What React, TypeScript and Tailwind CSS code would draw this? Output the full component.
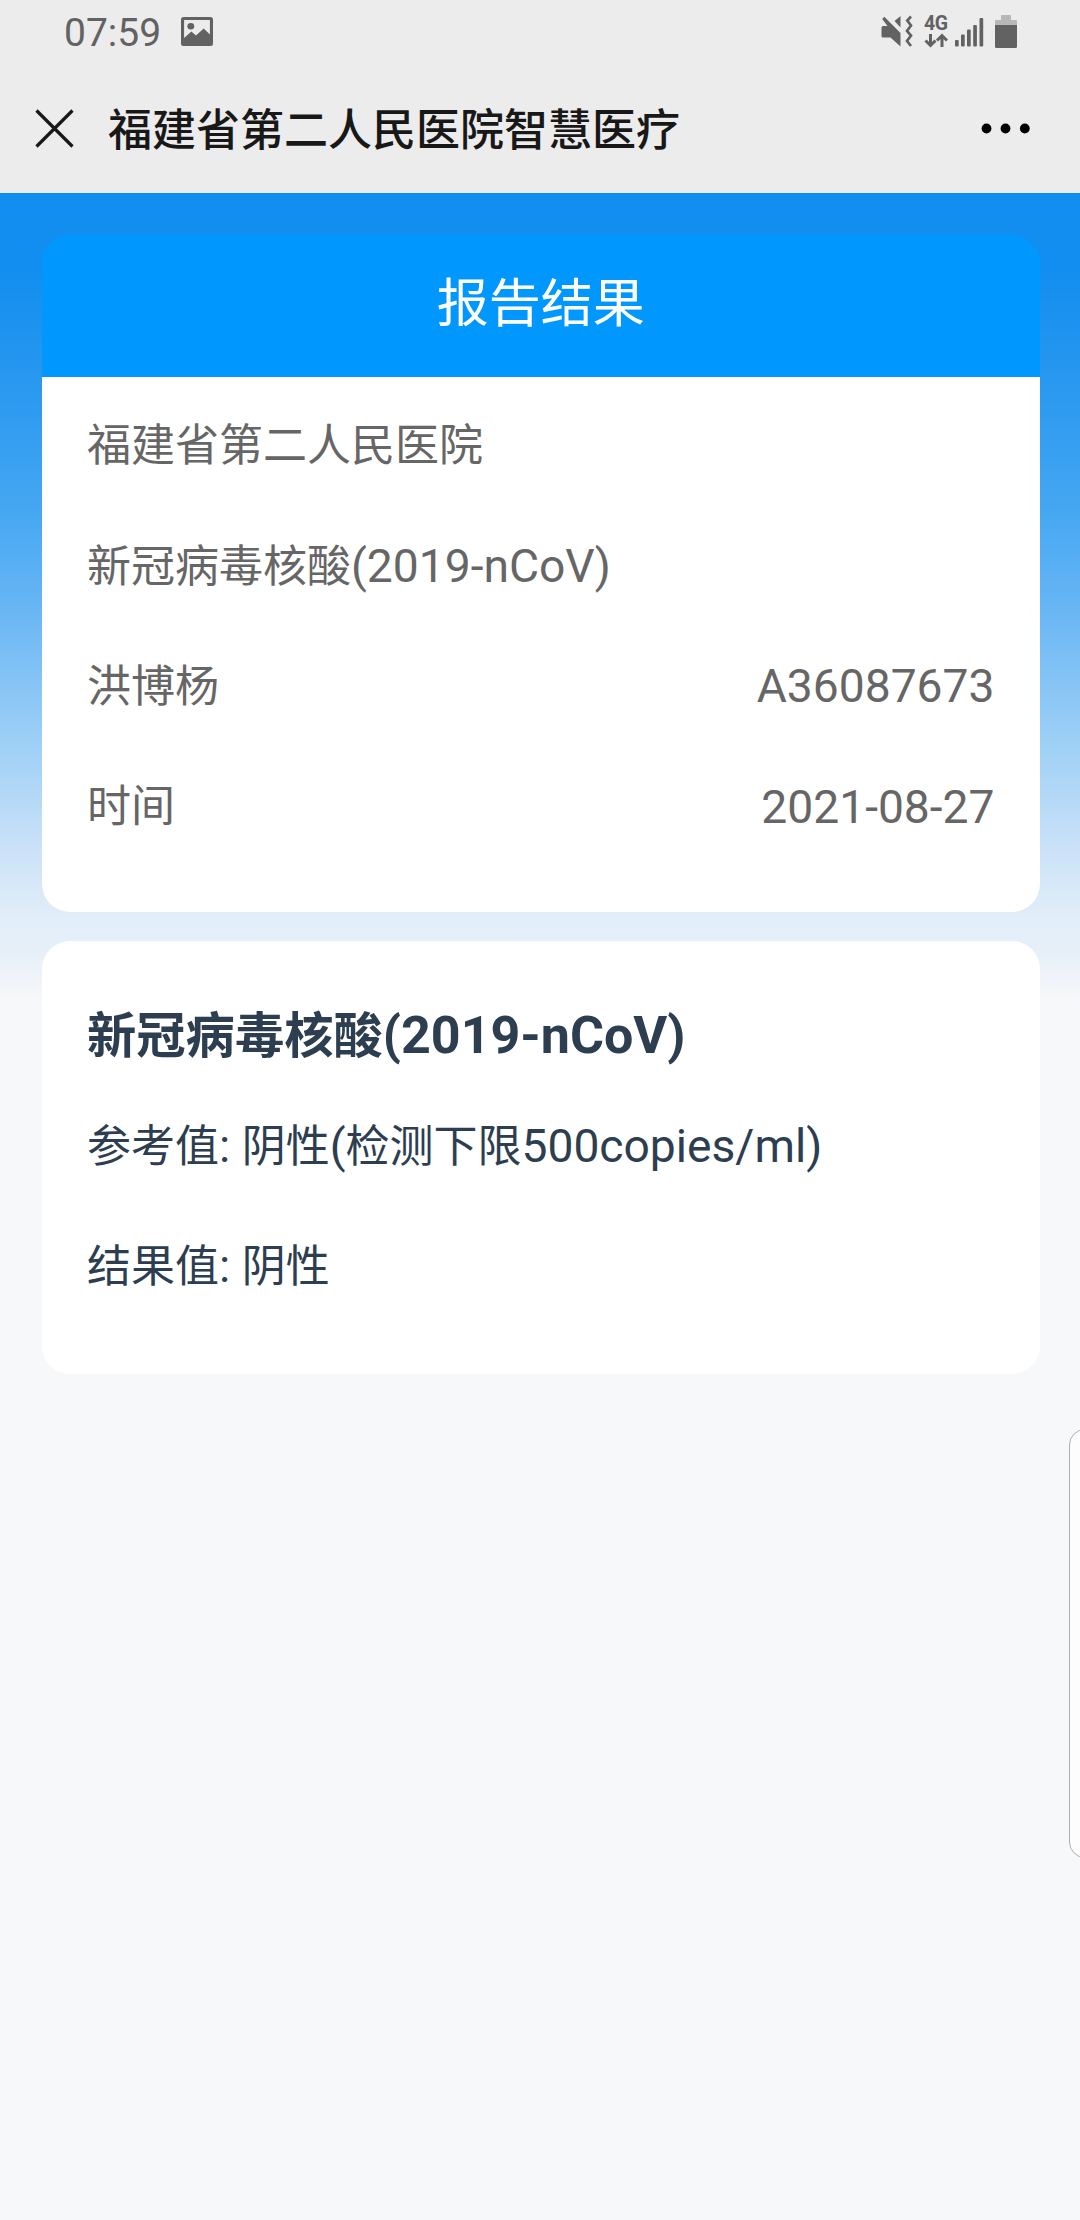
import React from "react";

// Latin runs are set slightly larger than the surrounding Chinese glyphs.
function Mixed({ text, latin }: { text: string; latin: string }) {
  const runs = text.match(/[\x20-\x7e]+|[^\x20-\x7e]+/g) ?? [];
  return (
    <span className="whitespace-pre">
      {runs.map((run, i) =>
        /^[\x20-\x7e]/.test(run) ? (
          <span key={i} className={latin}>
            {run}
          </span>
        ) : (
          run
        ),
      )}
    </span>
  );
}

function StatusBar() {
  return (
    <div className="flex h-16 items-start justify-between pr-[63px] pl-16 text-[#626262]">
      <div className="flex items-start">
        <span className="mt-[10px] w-[97px] text-[39px] leading-[46px]">07:59</span>
        <svg className="mt-[17px] ml-5" width="32" height="29" viewBox="0 0 31 29" preserveAspectRatio="none">
          <rect width="31" height="29" rx="2.5" fill="#626262" />
          <path d="M3 3h25v14.500l-6-6-7.500 7-4.500-4-7 6.500z" fill="#ececec" />
          <circle cx="9.500" cy="9.300" r="3.300" fill="#626262" />
        </svg>
      </div>
      <div className="flex items-start">
        <svg className="mt-[15px]" width="32" height="33" viewBox="0 0 32 33" fill="#626262">
          <path d="M.5 12.500q0-1.500 1.500-1.500h4.500L1.200 4 3.300 1.800 19.500 18v13.500L9.500 22.500H2q-1.500 0-1.500-1.500z" />
          <path d="M19.500 1v11.500l-6-6.500z" />
          <path d="M30 1.500l-3.700 4 3.700 5-4 5.500 4 4.500-4 5.500 4 5" fill="none" stroke="#626262" strokeWidth="2.700" />
        </svg>
        <div className="mt-[14px] ml-[11px] flex w-6 flex-col">
          <span className="h-[19px] text-[19.500px] leading-[19px] font-bold tracking-[-0.5px]">4G</span>
          <svg width="24" height="15" viewBox="0 0 24 15" fill="none" stroke="#626262" strokeWidth="3">
            <path d="M6.500 1v11.500M1.500 7.500l5 5 5-5" />
            <path d="M18 14V2.500M13 7.500l5-5 5 5" />
          </svg>
        </div>
        <svg className="mt-[17px] ml-[7px]" width="29" height="30" viewBox="0 0 29 30" fill="#626262">
          <rect x="0" y="23" width="3.700" height="6.500" rx="1" />
          <rect x="6" y="17.500" width="3.700" height="12" rx="1" />
          <rect x="12" y="12.500" width="3.700" height="17" rx="1" />
          <rect x="18.200" y="8" width="3.700" height="21.500" rx="1" />
          <rect x="24.500" y="1" width="3.700" height="28.500" rx="1" />
        </svg>
        <svg className="mt-[15px] ml-[11px]" width="22" height="33" viewBox="0 0 22 33">
          <path d="M1 5h5V1q0-1 1-1h8q1 0 1 1v4h5q1 0 1 1v5H0V6q0-1 1-1z" fill="#b7b7b7" />
          <path d="M0 10h22v21.500q0 1.500-1.500 1.500h-19Q0 33 0 31.500z" fill="#626262" />
        </svg>
      </div>
    </div>
  );
}

function TitleBar() {
  return (
    <div className="flex h-[129px] items-start pr-[50px] pl-[35px] text-[#181818]">
      <svg className="mt-[45px]" width="39" height="39" viewBox="0 0 39 39" stroke="#181818" strokeWidth="3.200">
        <path d="M1.500 1.500l36 36M37.500 1.500l-36 36" />
      </svg>
      <h1 className="mt-[37px] ml-[34px] flex-1 text-[44px] leading-[60px] font-medium">
        福建省第二人民医院智慧医疗
      </h1>
      <svg className="mt-[59px]" width="49" height="11" viewBox="0 0 49 11">
        <circle cx="5.500" cy="5.500" r="4.900" />
        <circle cx="24.500" cy="5.500" r="4.900" />
        <circle cx="43.800" cy="5.500" r="4.900" />
      </svg>
    </div>
  );
}

function Row({ left, right }: { left: string; right?: string }) {
  return (
    <div className="flex h-[120.500px] items-center justify-between text-[44px] leading-[60px] text-[#666666]">
      <Mixed text={left} latin="text-[46.200px]" />
      {right && <Mixed text={right} latin="text-[46.200px]" />}
    </div>
  );
}

export default function App() {
  return (
    <div className="relative h-[2220px] w-[1080px] overflow-hidden bg-[#f7f8fa] font-['Roboto','Noto_Sans_CJK_SC',sans-serif]">
      <header className="h-[193px] bg-[#ececec]">
        <StatusBar />
        <TitleBar />
      </header>
      <main className="h-[807px] bg-[linear-gradient(180deg,#118eef_0px,#118eef_75px,#2b99f0_200px,#46a7f2_320px,#66b5f4_410px,#a2d1f6_560px,#cce2f8_660px,#e0edf8_720px,#e8f0f9_765px,#f7f8fa_807px)] px-[42px] pt-[42px]">
        <section className="w-[997.500px]">
          <h2 className="flex h-[141.500px] items-center justify-center rounded-t-[28px] bg-[#0098ff] pb-[2px] text-[52px] leading-[72px] text-white">
            报告结果
          </h2>
          <div className="h-[535.500px] rounded-b-[28px] bg-white px-[45px] pt-[9px]">
            <Row left="福建省第二人民医院" />
            <Row left="新冠病毒核酸(2019-nCoV)" />
            <Row left="洪博杨" right="A36087673" />
            <Row left="时间" right="2021-08-27" />
          </div>
        </section>
        <section className="mt-[29px] h-[433px] w-[997.500px] rounded-[28px] bg-white px-[45px] pt-[45px] text-[#2c3e50]">
          <h3 className="h-[100px] text-[49.300px] leading-[100px] font-bold">
            <Mixed text="新冠病毒核酸(2019-nCoV)" latin="text-[52px]" />
          </h3>
          <p className="h-[120px] text-[44px] leading-[120px]">
            <Mixed text="参考值: 阴性(检测下限500copies/ml)" latin="text-[46.200px]" />
          </p>
          <p className="h-[120px] text-[44px] leading-[120px]">
            <Mixed text="结果值: 阴性" latin="text-[46.200px]" />
          </p>
        </section>
      </main>
      {/* Edge panel peeking in from the right side of the screen */}
      <div className="absolute top-[1429px] left-[1069px] h-[429px] w-[40px] rounded-[16px] border border-[#aeb0b2] bg-[#fdfdfd]" />
    </div>
  );
}
